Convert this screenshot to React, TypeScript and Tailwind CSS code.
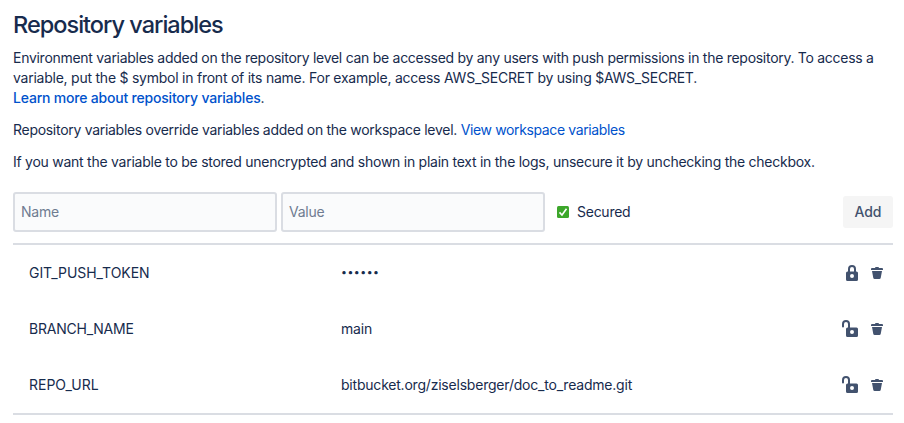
import React from "react";

type Variable = { name: string; value: string; secured: boolean; nameClass: string };

const variables: Variable[] = [
  { name: "GIT_PUSH_TOKEN", value: "••••••", secured: true, nameClass: "tracking-[-0.06px]" },
  { name: "BRANCH_NAME", value: "main", secured: false, nameClass: "tracking-[-0.23px]" },
  { name: "REPO_URL", value: "bitbucket.org/ziselsberger/doc_to_readme.git", secured: false, nameClass: "tracking-[0px]" },
];

const lockBody =
  "M7.500 10.500h9a1.500 1.500 0 0 1 1.500 1.500v6.500a1.500 1.500 0 0 1-1.500 1.500h-9A1.500 1.500 0 0 1 6 18.500V12a1.500 1.500 0 0 1 1.500-1.500zM12 13a2 2 0 1 0 0 4 2 2 0 0 0 0-4z";

function LockIcon() {
  return (
    <svg width="24" height="24" viewBox="0 0 24 24" fill="none">
      <path d="M9 11V8a3 3 0 0 1 6 0v3" stroke="#42526e" strokeWidth="2" />
      <path fillRule="evenodd" fill="#42526e" d={lockBody} />
    </svg>
  );
}

function UnlockIcon() {
  return (
    <svg width="24" height="24" viewBox="0 0 24 24" fill="none">
      <path d="M3 9.500V7a3 3 0 0 1 6 0v4" stroke="#42526e" strokeWidth="2" strokeLinecap="round" />
      <path fillRule="evenodd" fill="#42526e" d={lockBody} />
    </svg>
  );
}

function TrashIcon() {
  return (
    <svg width="16" height="16" viewBox="0 0 16 16" fill="#42526e">
      <path d="M3 6h10l-1.300 6.900a1.400 1.400 0 0 1-1.400 1.100H5.700a1.400 1.400 0 0 1-1.400-1.100zM2 4a1 1 0 0 1 1-1h3a1 1 0 0 1 1-1h2a1 1 0 0 1 1 1h3a1 1 0 0 1 1 1v1H2z" />
    </svg>
  );
}

export default function App() {
  return (
    <main className="h-[423px] w-[904px] bg-white pl-[13px] pr-[11px] pt-[11px] font-['Inter',sans-serif] text-[14px] leading-5 tracking-[-0.256px] text-[#172b4d]">
      <h1 className="text-[23.5px] font-medium leading-7 tracking-[-0.99px]">Repository variables</h1>
      <p className="mt-[9px] whitespace-nowrap">
        <span className="tracking-[-0.28px]">
          Environment variables added on the repository level can be accessed by any users with push permissions in the repository. To access a
        </span>
        <br />
        <span className="tracking-[-0.24px]">variable, put the $ symbol in front of its name. For example, access AWS_SECRET by using $AWS_SECRET.</span>
        <br />
        <a className="font-medium tracking-[-0.2px] text-[#0052cc]">Learn more about repository variables</a>.
      </p>
      <p className="mt-3">
        <span className="tracking-[-0.29px]">Repository variables override variables added on the workspace level. </span>
        <a className="tracking-[-0.37px] text-[#0052cc]">View workspace variables</a>
      </p>
      <p className="mt-3">If you want the variable to be stored unencrypted and shown in plain text in the logs, unsecure it by unchecking the checkbox.</p>
      <div className="mt-5 flex h-10 items-center gap-1">
        <div className="flex h-10 w-[264px] items-center rounded-[3px] border-2 border-[#dadde3] bg-[#fafbfc] px-1.5 text-[#6f7c91]">Name</div>
        <div className="flex h-10 w-[264px] items-center rounded-[3px] border-2 border-[#dadde3] bg-[#fafbfc] px-1.5 text-[#6f7c91]">Value</div>
        <svg className="ml-2" width="12" height="12" viewBox="0 0 12 12">
          <rect width="12" height="12" rx="1.500" fill="#3da72b" />
          <path d="M2.500 6.400 5 9l4.500-6.300" fill="none" stroke="white" strokeWidth="1.600" />
        </svg>
        <span className="ml-1">Secured</span>
        <button className="ml-auto h-8 w-[50px] rounded-[3px] bg-[#f5f5f5] font-medium tracking-[-0.1px] text-[#42526e]">Add</button>
      </div>
      <div className="mt-[11px] border-y-2 border-[#dadde3]">
        {variables.map((v) => (
          <div key={v.name} className="flex h-14 items-center pl-4 pr-2">
            <span className={`w-[312px] ${v.nameClass}`}>{v.name}</span>
            <span className={v.secured ? "flex-1 text-[10.5px] tracking-[0.5px]" : "flex-1 tracking-[-0.21px]"}>{v.value}</span>
            {v.secured ? <LockIcon /> : <UnlockIcon />}
            <span className="ml-[5px]"><TrashIcon /></span>
          </div>
        ))}
      </div>
    </main>
  );
}
